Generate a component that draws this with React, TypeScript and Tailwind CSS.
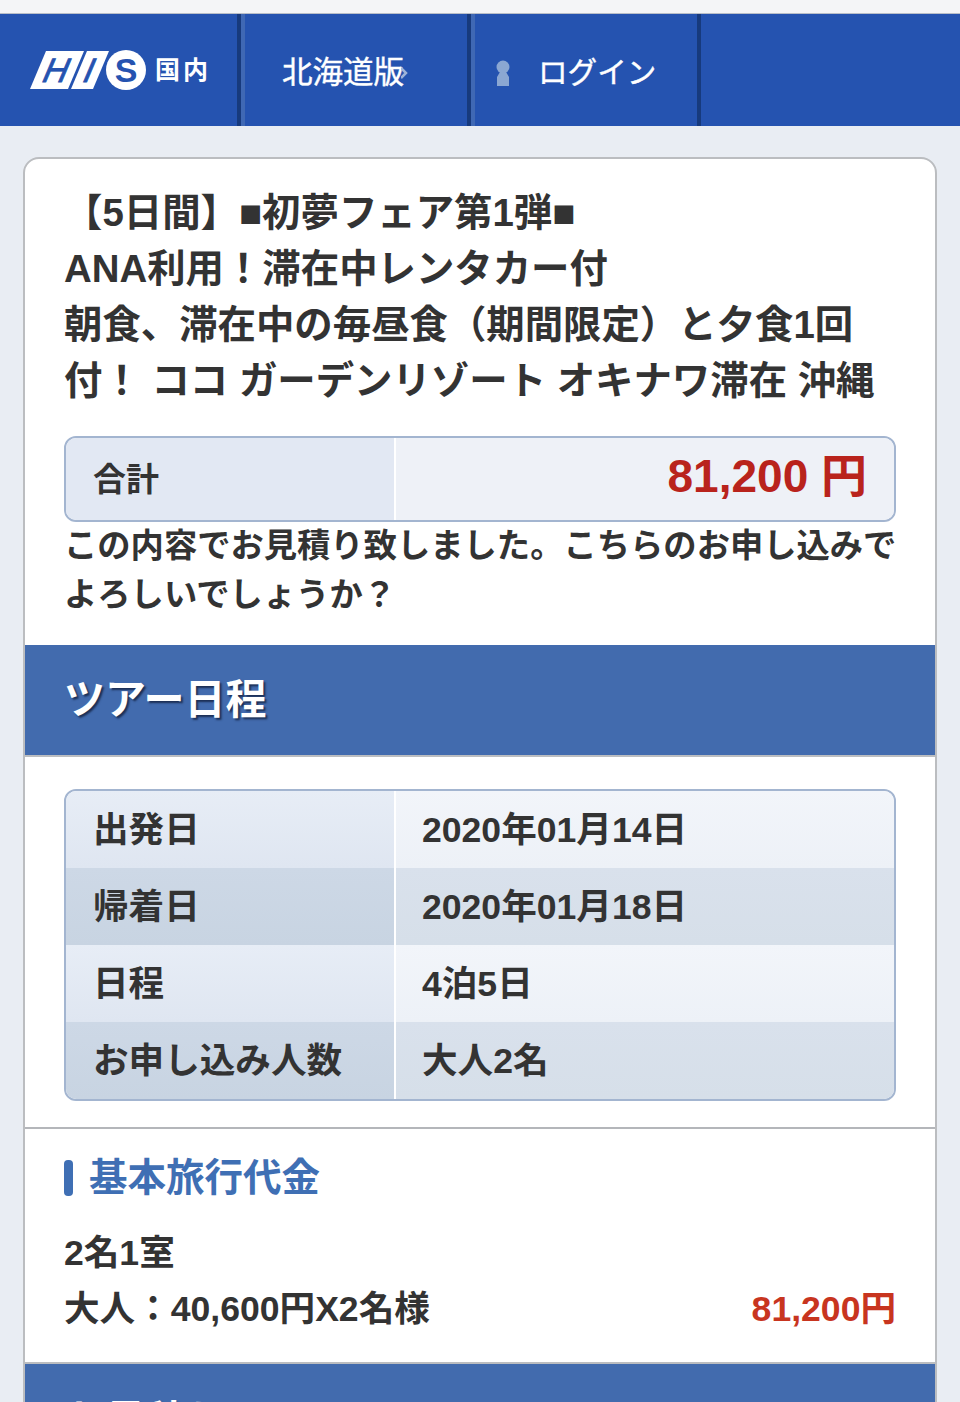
const ROWS = [
  { label: '出発日', value: '2020年01月14日', odd: false },
  { label: '帰着日', value: '2020年01月18日', odd: true },
  { label: '日程', value: '4泊5日', odd: false },
  { label: 'お申し込み人数', value: '大人2名', odd: true },
];

function HisLogo() {
  return (
    <svg width="120" height="42" viewBox="0 0 120 42" className="shrink-0">
      <polygon points="0,40 16,2 54,2 38,40" fill="#fff" />
      <polygon points="41,40 57,2 79,2 63,40" fill="#fff" />
      <text transform="translate(22,33) skewX(-23)" textAnchor="middle" fontSize="34" stroke="#2553b0" strokeWidth="0.8" fontFamily="'Liberation Sans', sans-serif" fill="#2553b0">H</text>
      <text transform="translate(55,33) skewX(-23)" textAnchor="middle" fontSize="34" stroke="#2553b0" strokeWidth="0.8" fontFamily="'Liberation Sans', sans-serif" fill="#2553b0">I</text>
      <circle cx="96" cy="21" r="20" fill="#fff" />
      <text x="96" y="33" textAnchor="middle" fontSize="34" fontWeight="700" fontFamily="'Liberation Sans', sans-serif" fill="#2553b0">S</text>
    </svg>
  );
}

function PersonIcon() {
  return (
    <svg width="16" height="26" viewBox="0 0 16 26" className="mt-[6px] shrink-0">
      <circle cx="8" cy="7" r="6.5" fill="#8ba7d2" />
      <path d="M5 12 h6 l3 5 v9 H2 v-9 z" fill="#8ba7d2" />
    </svg>
  );
}

export default function App() {
  return (
    <div className="w-[960px] h-[1402px] overflow-hidden bg-[#e9edf3] text-[#333] font-['Liberation_Sans','Noto_Sans_CJK_JP',sans-serif]">
      <div className="h-[14px] bg-[#f4f5f7] border-b border-[#b9bec8]" />
      <nav className="flex h-[112px] bg-[#2553b0] text-white">
        <div className="flex w-[241px] items-center border-r-4 border-[#173a7d] pl-[30px]">
          <HisLogo />
          <span className="ml-[5px] text-[25px] font-bold leading-none tracking-[3px] whitespace-nowrap">国内</span>
        </div>
        <div className="flex w-[230px] items-center border-x-4 border-l-[#3f68b4] border-r-[#173a7d] pt-[6px] pl-[37px] text-[30.5px] [-webkit-text-stroke:0.4px_#fff]">
          <span>北海道版</span>
          <svg width="8" height="12" viewBox="0 0 8 12" className="-ml-[3px] shrink-0">
            <path d="M0 1 L5 6 L0 11" fill="none" stroke="#9fb4d8" strokeWidth="2.5" />
          </svg>
        </div>
        <div className="flex w-[230px] items-center border-x-4 border-l-[#3f68b4] border-r-[#173a7d] pl-[20px] text-[29.6px] [-webkit-text-stroke:0.4px_#fff]">
          <PersonIcon />
          <span className="mt-[6px] ml-[27px]">ログイン</span>
        </div>
      </nav>

      <main className="mx-[23px] mt-[31px] rounded-t-[16px] border-2 border-[#bbbdc0] bg-white">
        <section className="px-[39px]">
          <h1 className="pt-[26px] text-[38.4px] leading-[56px] font-bold whitespace-nowrap">
            【5日間】■初夢フェア第1弾■<br />
            ANA利用！滞在中レンタカー付<br />
            朝食、滞在中の毎昼食（期間限定）と夕食1回<br />
            付！ ココ ガーデンリゾート オキナワ滞在 沖縄
          </h1>
          <div className="mt-[27px] flex h-[86px] overflow-hidden rounded-[12px] border-2 border-[#a3b5d0]">
            <div className="flex w-[330px] items-center border-r-2 border-white bg-[#e2e8f3] pt-[2px] pl-[27px] text-[33px] font-bold">合計</div>
            <div className="flex flex-1 items-center justify-end bg-[#eef1f7] pr-[27px] pb-[6px] text-[46px] font-bold text-[#b9231c]">81,200 円</div>
          </div>
          <p className="-mt-px text-[33.3px] leading-[49px] font-bold whitespace-nowrap">
            この内容でお見積り致しました。こちらのお申し込みで<br />
            よろしいでしょうか？
          </p>
        </section>

        <h2 className="mt-[26px] flex h-[112px] items-center border-b-2 border-[#bbbdc0] bg-[#426bae] pt-[2px] pl-[39px] text-[41px] font-bold text-white [text-shadow:2px_2px_2px_#1c2f55]">ツアー日程</h2>

        <section className="border-b-2 border-[#b4b6ba] px-[39px] pt-[32px] pb-[26px]">
          <div className="overflow-hidden rounded-[12px] border-2 border-[#a3b5d0]">
            {ROWS.map((row) => (
              <div key={row.label} className="flex h-[77px] items-center text-[35.6px] font-bold">
                <div className={`flex h-full w-[330px] items-center border-r-2 border-white bg-linear-to-b pt-[2px] pl-[27px] ${row.odd ? 'from-[#cdd8e6] to-[#c8d4e2]' : 'from-[#e7edf6] to-[#dfe6f1]'}`}>{row.label}</div>
                <div className={`flex h-full flex-1 items-center bg-linear-to-b pt-[2px] pl-[26px] ${row.odd ? 'from-[#d9e1ec] to-[#d6dfe9]' : 'from-[#f2f5fa] to-[#edf1f7]'}`}>{row.value}</div>
              </div>
            ))}
          </div>
        </section>

        <section className="px-[39px] pt-[22px] pb-[25px]">
          <div className="flex items-center gap-[16px]">
            <span className="h-[36px] w-[9px] rounded-[4px] bg-[#3f6fb4]" />
            <h3 className="text-[38.5px] leading-[54px] font-bold text-[#3f6fb4]">基本旅行代金</h3>
          </div>
          <div className="mt-[20px] text-[35.6px] leading-[56px] font-bold">
            <div>2名1室</div>
            <div className="flex justify-between">
              <span>大人：40,600円X2名様</span>
              <span className="text-[#c8351f]">81,200円</span>
            </div>
          </div>
        </section>

        <h2 className="flex h-[112px] items-center border-t-2 border-[#bbbdc0] bg-[#426bae] pt-[6px] pl-[39px] text-[41px] font-bold text-white [text-shadow:2px_2px_2px_#1c2f55]">お見積り</h2>
      </main>
    </div>
  );
}
